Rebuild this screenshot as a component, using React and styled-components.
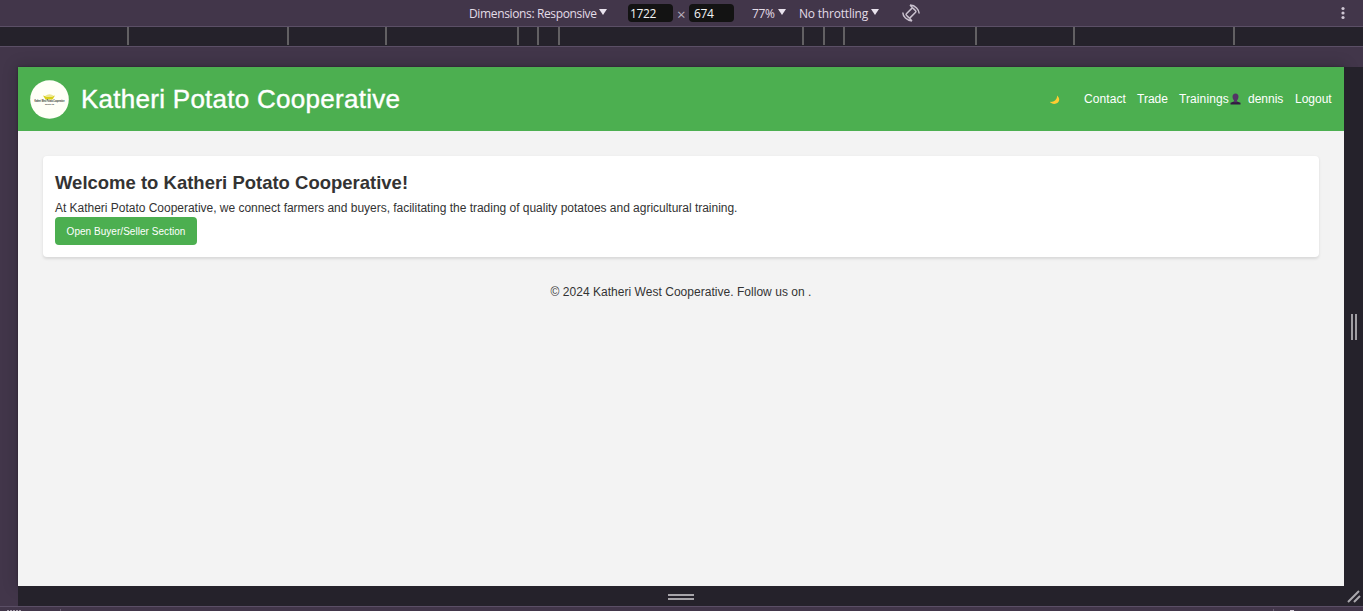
import React from "react";
import styled, { createGlobalStyle } from "styled-components";

const GlobalStyle = createGlobalStyle`
  * { box-sizing: border-box; }
  html, body { margin: 0; padding: 0; }
  body { overflow: hidden; background: #42364a; }
  h1, h2, p { margin: 0; font-weight: 400; }
`;

const Window = styled.div`
  width: 1363px;
  height: 611px;
  display: flex;
  flex-direction: column;
  overflow: hidden;
  background: #42364a;
`;

const Toolbar = styled.div`
  height: 27px;
  flex: none;
  display: flex;
  align-items: center;
  padding-left: 469px;
  border-bottom: 1px solid #5b4f66;
  color: #e3dce7;
  font: 12px/26px "Open Sans", "Noto Sans", sans-serif;
  white-space: nowrap;
`;

const ToolLabel = styled.span`
  width: ${(p) => p.$width}px;
  margin-left: ${(p) => p.$gap || 0}px;
  letter-spacing: ${(p) => p.$spacing || 0}px;
  height: 26px;
  line-height: 27px;
  flex: none;
`;

const Times = styled.span`
  width: 9px;
  height: 26px;
  margin: 0 3px 0 4px;
  flex: none;
  color: #b9b1be;
  font-size: 15px;
  line-height: 29px;
`;

const Caret = styled.span`
  width: 8px;
  height: 6px;
  flex: none;
  margin-top: -2px;
  background: #e9e2ed;
  clip-path: polygon(0 0, 100% 0, 50% 100%);
`;

const SizeField = styled.span`
  width: 45px;
  height: 18px;
  flex: none;
  padding-left: ${(p) => p.$pad}px;
  margin-left: ${(p) => p.$gap}px;
  border-radius: 4px;
  background: #131313;
  color: #f3f3f3;
  line-height: 19px;
  letter-spacing: -0.4px;
`;

const RotateIcon = styled.svg`
  margin-left: 22px;
  flex: none;
`;

const MoreIcon = styled.svg`
  margin: 0 18px 0 auto;
  flex: none;
`;

const Ruler = styled.div`
  height: 20px;
  flex: none;
  display: flex;
  padding-left: 127px;
  background: #25222b;
  border-bottom: 1px solid #5b4f66;
`;

const Segment = styled.div`
  width: ${(p) => p.$width}px;
  height: 18px;
  flex: none;
  border-left: 2px solid #626063;
`;

const Stage = styled.div`
  height: 559px;
  flex: none;
  display: grid;
  grid-template-columns: 18px 1326px 19px;
  grid-template-rows: 20px 519px 20px;
`;

const Viewport = styled.div`
  grid-area: 2 / 2;
  display: flex;
  flex-direction: column;
  background: #f3f3f3;
  color: #333;
  font-family: "Liberation Sans", Arial, sans-serif;
  box-shadow: 0 0 14px rgba(20, 14, 24, 0.25), 0 0 2px rgba(20, 14, 24, 0.5);
`;

const SideHandle = styled.div`
  grid-area: 2 / 3;
  z-index: 1;
  display: flex;
  justify-content: center;
  align-items: center;
  gap: 2px;
  padding-left: 1px;
  background: #25222b;
`;

const BottomHandle = styled.div`
  grid-area: 3 / 2 / 4 / 4;
  z-index: 1;
  display: flex;
  align-items: center;
  background: #25222b;
`;

const Grip = styled.div`
  width: 26px;
  height: 6px;
  margin: 2px 0 0 650px;
  border-top: 2px solid #a7a5aa;
  border-bottom: 2px solid #a7a5aa;
`;

const SideBar = styled.i`
  width: 2px;
  height: 26px;
  background: #a09ea3;
`;

const CornerGrip = styled.svg`
  margin: 0 2px 0 auto;
`;

const Drawer = styled.div`
  height: 5px;
  flex: none;
  display: flex;
  align-items: flex-end;
  border-top: 1px solid #5b4f66;
`;

const DrawerMark = styled.i`
  width: ${(p) => p.$width}px;
  height: ${(p) => p.$height || 1}px;
  margin-left: ${(p) => p.$gap}px;
  background: ${(p) => p.$color || "#a79fac"};
`;

const Header = styled.header`
  height: 64px;
  flex: none;
  display: flex;
  align-items: center;
  padding: 0 12px;
  background: #4caf50;
  color: #fff;
`;

const Title = styled.h1`
  margin: 0 0 0 12px;
  font-size: 26px;
  line-height: 30px;
  letter-spacing: 0.27px;
  white-space: nowrap;
  -webkit-text-stroke: 0.4px #fff;
`;

const Nav = styled.nav`
  display: flex;
  align-items: center;
  margin-left: auto;
  font-size: 12px;
  line-height: 18px;
  white-space: nowrap;
`;

const NavLink = styled.a`
  width: ${(p) => p.$width}px;
  margin-left: ${(p) => p.$gap}px;
  letter-spacing: ${(p) => p.$spacing || 0}px;
`;

const Moon = styled.svg`
  flex: none;
  margin-top: 2px;
`;

const Person = styled.svg`
  flex: none;
  margin: -1px 0 0 2px;
`;

const Card = styled.section`
  height: 101.6px;
  flex: none;
  margin: 24.64px 25px 0;
  padding: 16px 12px 0;
  border-radius: 4px;
  background: #fff;
  box-shadow: 0 1.5px 3px rgba(0, 0, 0, 0.11);
`;

const Heading = styled.h2`
  font-size: 18.48px;
  font-weight: 700;
  line-height: 22px;
  letter-spacing: 0.01px;
  white-space: nowrap;
`;

const Copy = styled.p`
  margin-top: 5px;
  font-size: 12px;
  line-height: 18px;
  letter-spacing: -0.02px;
  white-space: nowrap;
`;

const Button = styled.button`
  display: block;
  width: 142px;
  height: 28px;
  margin: 0;
  padding: 1px 0 0;
  border: 0;
  border-radius: 4px;
  background: #4caf50;
  color: #fff;
  font: 10px/27px "Liberation Sans", Arial, sans-serif;
  letter-spacing: 0.04px;
  white-space: nowrap;
`;

const Footer = styled.footer`
  margin-top: 25.76px;
  text-align: center;
  font-size: 12px;
  line-height: 18px;
  letter-spacing: 0.03px;
`;

const Logo = () => (
  <svg width="39" height="39" viewBox="0 0 39 39">
    <circle cx="19.5" cy="19.5" r="19.3" fill="#fffff7" />
    <path d="M13 15.5q6.5 2.500 12 0l-2.500 4h-7z" fill="#d9cf17" />
    <path d="M15 16q4.500-3.500 9 0q-4.500 2-9 0z" fill="#ece78c" />
    <text x="4.500" y="22" fontSize="2.600" fontWeight="700" textLength="30" lengthAdjust="spacingAndGlyphs" fill="#1b2a1b">Katheri West Potato Cooperative</text>
    <text x="15" y="25" fontSize="1.800" fontWeight="700" textLength="9" lengthAdjust="spacingAndGlyphs" fill="#1b2a1b">Society Ltd</text>
  </svg>
);

const SEGMENTS = [160, 98, 132, 20, 21, 244, 21, 20, 132, 98, 160, 2];

export default function App() {
  return (
    <Window>
      <GlobalStyle />
      <Toolbar>
        <ToolLabel $width={130} $spacing={-0.36}>Dimensions: Responsive</ToolLabel>
        <Caret />
        <SizeField $gap={21} $pad={2}>1722</SizeField>
        <Times>×</Times>
        <SizeField $gap={0} $pad={5}>674</SizeField>
        <ToolLabel $width={26} $gap={18} $spacing={-0.3}>77%</ToolLabel>
        <Caret />
        <ToolLabel $width={72} $gap={13} $spacing={-0.2}>No throttling</ToolLabel>
        <Caret />
        <RotateIcon width="20" height="20" viewBox="0 0 20 20" fill="none" stroke="#c9c1ce" strokeWidth="1.500">
          <rect x="7.300" y="5.200" width="5.400" height="9.600" rx="1" transform="rotate(45 10 10)" />
          <path d="M1.800 9.500C2 13.500 5.500 17.600 11 17.900M8.500 15.300l2.500 2.600M18.200 10.500C18 6.500 14.500 2.400 9 2.100M11.500 4.700L9 2.100" />
        </RotateIcon>
        <MoreIcon width="4" height="14" viewBox="0 0 4 14" fill="#cfc7d4">
          <circle cx="2" cy="2.500" r="1.600" />
          <circle cx="2" cy="7" r="1.600" />
          <circle cx="2" cy="11.500" r="1.600" />
        </MoreIcon>
      </Toolbar>
      <Ruler>
        {SEGMENTS.map((w, i) => <Segment key={i} $width={w} />)}
      </Ruler>
      <Stage>
        <Viewport>
          <Header>
            <Logo />
            <Title>Katheri Potato Cooperative</Title>
            <Nav>
              <Moon width="11" height="10" viewBox="0 0 11 10">
                <path d="M8 .5C11 3 10.700 6 8.700 7.800C6.500 9.600 2.500 9.300.8 6.800C4 7.500 8.500 5 8 .5z" fill="#ffcc32" />
              </Moon>
              <NavLink $gap={24} $width={41} $spacing={0.1}>Contact</NavLink>
              <NavLink $gap={12} $width={31}>Trade</NavLink>
              <NavLink $gap={11} $width={49} $spacing={0.1}>Trainings</NavLink>
              <Person width="11" height="12" viewBox="0 0 11 12">
                <path d="M.5 11.500V9.800L4 8.500h3l3.500 1.300v1.700z" fill="#321b41" />
                <path d="M5.500.5c2 0 3 1.300 3 3.200S7.300 7 7 7.300v2H4v-2C3.700 7 2.500 5.600 2.500 3.700S3.500.5 5.500.5z" fill="#533566" />
              </Person>
              <NavLink $gap={7} $width={35}>dennis</NavLink>
              <NavLink $gap={12} $width={37}>Logout</NavLink>
            </Nav>
          </Header>
          <Card>
            <Heading>Welcome to Katheri Potato Cooperative!</Heading>
            <Copy>At Katheri Potato Cooperative, we connect farmers and buyers, facilitating the trading of quality potatoes and agricultural training.</Copy>
            <Button>Open Buyer/Seller Section</Button>
          </Card>
          <Footer>© 2024 Katheri West Cooperative. Follow us on .</Footer>
        </Viewport>
        <SideHandle>
          <SideBar />
          <SideBar />
        </SideHandle>
        <BottomHandle>
          <Grip />
          <CornerGrip width="14" height="14" viewBox="0 0 14 14" stroke="#aaa8ad" strokeWidth="2">
            <path d="M1 13L12 2M7 13L13 7" />
          </CornerGrip>
        </BottomHandle>
      </Stage>
      <Drawer>
        <DrawerMark $gap={7} $width={2} />
        <DrawerMark $gap={1} $width={2} />
        <DrawerMark $gap={1} $width={2} />
        <DrawerMark $gap={1} $width={2} />
        <DrawerMark $gap={1} $width={2} />
        <DrawerMark $gap={39} $width={1} $height={2} $color="#6b6074" />
        <DrawerMark $gap={1212} $width={1} $height={2} $color="#6b6074" />
        <DrawerMark $gap={16} $width={4} $color="#d0c9d5" />
      </Drawer>
    </Window>
  );
}
